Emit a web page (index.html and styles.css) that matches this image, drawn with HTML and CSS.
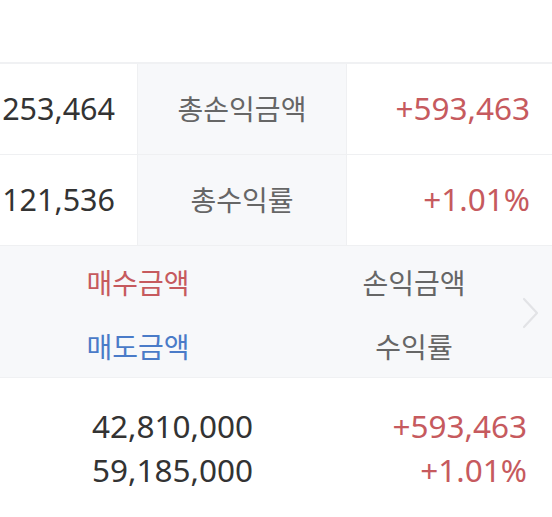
FILE: index.html
```html
<!DOCTYPE html>
<html lang="ko">
<head>
<meta charset="utf-8">
<link rel="stylesheet" href="styles.css">
</head>
<body>
<div class="page">
  <div class="spacer"></div>
  <div class="summary">
    <div class="row">
      <div class="cell val">253,464</div>
      <div class="cell label">총손익금액</div>
      <div class="cell val up">+593,463</div>
    </div>
    <div class="row">
      <div class="cell val">121,536</div>
      <div class="cell label">총수익률</div>
      <div class="cell val up">+1.01%</div>
    </div>
  </div>
  <div class="head">
    <div class="hcell buy">매수금액</div>
    <div class="hcell">손익금액</div>
    <div class="hcell sell">매도금액</div>
    <div class="hcell">수익률</div>
    <svg class="chev" width="18" height="32" viewBox="0 0 18 32"><polyline points="2,2 15,16 2,30" fill="none" stroke="#e2e3e6" stroke-width="2.2" stroke-linecap="round" stroke-linejoin="round"/></svg>
  </div>
  <div class="data">
    <div class="dcell">42,810,000</div>
    <div class="dcell up">+593,463</div>
    <div class="dcell">59,185,000</div>
    <div class="dcell up">+1.01%</div>
  </div>
</div>
</body>
</html>
```
FILE: styles.css
```css
html, body {
  margin: 0;
  padding: 0;
  background: #fff;
}
body {
  font-family: "Noto Sans", "Noto Sans CJK KR", sans-serif;
  color: #333;
}
.page {
  width: 552px;
  height: 517px;
  overflow: hidden;
}
.spacer {
  height: 62px;
}
.summary {
  border-top: 2px solid #f0f1f3;
}
.row {
  display: grid;
  grid-template-columns: 138px 209px 1fr;
  height: 90px;
  border-bottom: 1px solid #eff0f2;
}
.cell {
  display: flex;
  align-items: center;
}
.val {
  justify-content: flex-end;
  font-size: 31.5px;
  color: #333;
  padding-bottom: 3px;
}
.row .cell:first-child {
  font-size: 30.5px;
  padding-right: 22px;
  border-right: 1px solid #eff0f2;
}
.row .cell:last-child {
  padding-right: 22px;
}
.label {
  justify-content: center;
  background: #f7f8fa;
  border-right: 1px solid #eff0f2;
  font-family: "Noto Sans CJK KR", sans-serif;
  font-size: 28px;
  color: #666;
  padding-bottom: 2px;
}
.up {
  color: #c65a5e;
}
.head {
  position: relative;
  background: #f7f8fa;
  height: 132px;
  box-sizing: border-box;
  padding-top: 2px;
  display: grid;
  grid-template-columns: 1fr 1fr;
  grid-template-rows: 67px 62px;
  border-bottom: 1px solid #f0f1f3;
}
.hcell {
  display: flex;
  align-items: center;
  justify-content: center;
  font-family: "Noto Sans CJK KR", sans-serif;
  font-size: 28px;
  color: #666;
}
.hcell.buy {
  color: #c65a5e;
}
.hcell.sell {
  color: #4a7bc8;
}
.chev {
  position: absolute;
  right: 12px;
  top: 51px;
}
.data {
  display: grid;
  grid-template-columns: 1fr 1fr;
  padding-top: 26px;
}
.dcell {
  text-align: right;
  font-size: 31.5px;
  line-height: 44px;
  color: #333;
  padding-right: 23px;
}
.dcell.up {
  color: #c65a5e;
  padding-right: 25px;
}
```
